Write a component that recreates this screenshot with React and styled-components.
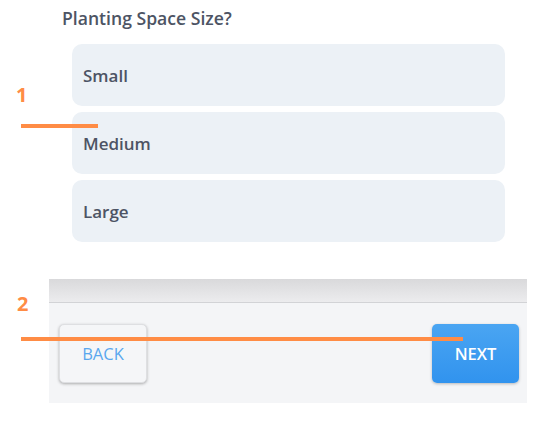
import React from 'react';
import styled, { createGlobalStyle } from 'styled-components';

const GlobalStyle = createGlobalStyle`
  html, body {
    margin: 0;
    padding: 0;
    background: #ffffff;
  }

  body {
    font-family: "Open Sans", "Noto Sans", Arial, sans-serif;
  }
`;

const Page = styled.div`
  position: relative;
  width: 537px;
  height: 423px;
  overflow: hidden;
`;

const Question = styled.div`
  padding: 6px 0 0 62px;
`;

const QuestionTitle = styled.h2`
  margin: 0;
  font-size: 17.6px;
  line-height: 25px;
  font-weight: 600;
  color: #4d5464;
`;

const OptionList = styled.div`
  display: flex;
  flex-direction: column;
  gap: 6px;
  width: 433px;
  margin: 13px 0 0 72px;
`;

const Option = styled.div`
  display: flex;
  align-items: center;
  height: 62px;
  padding: 0 11px;
  border-radius: 10px;
  background: #ecf1f6;
  font-size: 17px;
  font-weight: 600;
  color: #4d5464;
  box-sizing: border-box;
`;

const Footer = styled.div`
  width: 478px;
  margin: 37px 0 0 49px;
  background: #f4f5f7;
`;

const FooterShade = styled.div`
  height: 23px;
  background: linear-gradient(#d9d9db, #ececee);
  border-bottom: 1px solid #d2d3d6;
`;

const FooterBar = styled.div`
  display: flex;
  justify-content: space-between;
  align-items: flex-start;
  padding: 21px 8px 20px 10px;
`;

const Button = styled.button`
  width: ${p => p.$width}px;
  height: 59px;
  border-radius: 5px;
  font-family: inherit;
  font-size: 16.5px;
  cursor: pointer;
  ${p => p.$primary ? `
    border: none;
    background: linear-gradient(#4aa5f2, #3193ee);
    color: #ffffff;
    font-weight: 600;
    box-shadow: 0 1px 3px rgba(0, 0, 0, 0.25);
  ` : `
    border: 1px solid #dedfe2;
    background: #f5f6f8;
    color: #5aa7ee;
    font-weight: 400;
    box-shadow: 0 1px 3px rgba(0, 0, 0, 0.3);
  `}
`;

const Marker = styled.div`
  position: absolute;
  left: ${p => p.$left}px;
  top: ${p => p.$top}px;
  font-size: 20px;
  line-height: 20px;
  font-weight: 700;
  color: #ff8c45;
`;

const Pointer = styled.div`
  position: absolute;
  left: 21px;
  top: ${p => p.$top}px;
  width: ${p => p.$width}px;
  height: 4px;
  background: #ff8c45;
`;

const options = ['Small', 'Medium', 'Large'];

export default function App() {
  return (
    <>
      <GlobalStyle />
      <Page>
        <Question>
          <QuestionTitle>Planting Space Size?</QuestionTitle>
        </Question>
        <OptionList>
          {options.map(o => <Option key={o}>{o}</Option>)}
        </OptionList>
        <Footer>
          <FooterShade />
          <FooterBar>
            <Button $width={88}>BACK</Button>
            <Button $width={87} $primary>NEXT</Button>
          </FooterBar>
        </Footer>

        <Marker $left={16} $top={85}>1</Marker>
        <Pointer $top={124} $width={77} />
        <Marker $left={17} $top={294}>2</Marker>
        <Pointer $top={337} $width={442} />
      </Page>
    </>
  );
}
